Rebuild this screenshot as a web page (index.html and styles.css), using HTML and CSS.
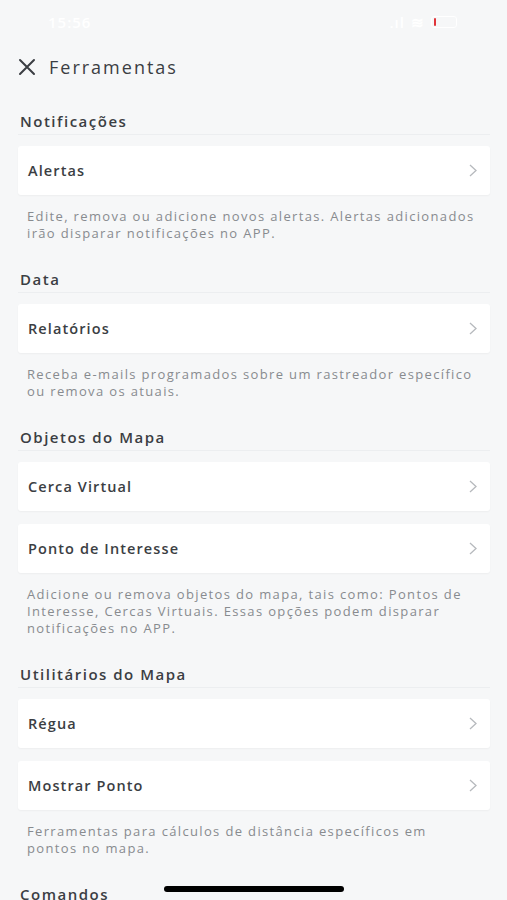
FILE: index.html
```html
<!DOCTYPE html>
<html>
<head>
    <meta charset="utf-8">
    <title>Ferramentas</title>
    <link rel="stylesheet" href="styles.css">
</head>
<body>
    <div class="statusbar">
        <span class="clock">15:56</span>
        <div class="status-icons">
            <span class="signal">.ıl</span>
            <span class="wifi">≋</span>
            <span class="battery"><span class="battery-level"></span></span>
        </div>
    </div>

    <div class="header">
        <svg class="close-icon" width="18" height="18" viewBox="0 0 18 18">
            <path d="M2 2 L16 16 M16 2 L2 16" stroke="#3b3e43" stroke-width="2" stroke-linecap="round" fill="none"/>
        </svg>
        <span class="header-title">Ferramentas</span>
    </div>

    <div class="section">
        <div class="section-title">Notificações</div>
        <div class="card">
            <span>Alertas</span>
            <svg class="chevron" width="8" height="13" viewBox="0 0 8 13"><polyline points="1,1 7,6.5 1,12" /></svg>
        </div>
        <p class="desc">Edite, remova ou adicione novos alertas. Alertas adicionados irão disparar notificações no APP.</p>
    </div>

    <div class="section">
        <div class="section-title">Data</div>
        <div class="card">
            <span>Relatórios</span>
            <svg class="chevron" width="8" height="13" viewBox="0 0 8 13"><polyline points="1,1 7,6.5 1,12" /></svg>
        </div>
        <p class="desc">Receba e-mails programados sobre um rastreador específico ou remova os atuais.</p>
    </div>

    <div class="section">
        <div class="section-title">Objetos do Mapa</div>
        <div class="card">
            <span>Cerca Virtual</span>
            <svg class="chevron" width="8" height="13" viewBox="0 0 8 13"><polyline points="1,1 7,6.5 1,12" /></svg>
        </div>
        <div class="card">
            <span>Ponto de Interesse</span>
            <svg class="chevron" width="8" height="13" viewBox="0 0 8 13"><polyline points="1,1 7,6.5 1,12" /></svg>
        </div>
        <p class="desc">Adicione ou remova objetos do mapa, tais como: Pontos de Interesse, Cercas Virtuais. Essas opções podem disparar notificações no APP.</p>
    </div>

    <div class="section">
        <div class="section-title">Utilitários do Mapa</div>
        <div class="card">
            <span>Régua</span>
            <svg class="chevron" width="8" height="13" viewBox="0 0 8 13"><polyline points="1,1 7,6.5 1,12" /></svg>
        </div>
        <div class="card">
            <span>Mostrar Ponto</span>
            <svg class="chevron" width="8" height="13" viewBox="0 0 8 13"><polyline points="1,1 7,6.5 1,12" /></svg>
        </div>
        <p class="desc">Ferramentas para cálculos de distância específicos em pontos no mapa.</p>
    </div>

    <div class="section">
        <div class="section-title">Comandos</div>
    </div>

    <div class="home-indicator"></div>
</body>
</html>
```

FILE: styles.css
```css
body {
    font-family: "Open Sans", "Noto Sans", sans-serif;
    margin: 0;
    padding: 0;
    background-color: #f6f7f8;
    color: #3b3e43;
    height: 900px;
    overflow: hidden;
}

.statusbar {
    height: 44px;
    display: flex;
    align-items: center;
    justify-content: space-between;
    padding: 0 50px 0 48px;
    color: #ffffff;
    font-size: 15px;
    font-weight: 600;
    letter-spacing: 1px;
}

.status-icons {
    display: flex;
    align-items: center;
    gap: 6px;
}

.battery {
    width: 22px;
    height: 10px;
    border: 1px solid #ffffff;
    border-radius: 3px;
    display: flex;
    align-items: center;
    padding-left: 2px;
}

.battery-level {
    width: 2px;
    height: 8px;
    background-color: #e0343a;
    border-radius: 1px;
}

.header {
    height: 46px;
    display: flex;
    align-items: center;
    padding-left: 18px;
    gap: 13px;
}

.header-title {
    font-size: 18px;
    font-weight: 500;
    letter-spacing: 2px;
}

.section {
    padding: 0 17px 0 18px;
}

.section-title {
    margin: 20px 0 0 0;
    padding: 0 0 2px 2px;
    font-size: 15px;
    font-weight: 600;
    line-height: 22px;
    letter-spacing: 1.5px;
    border-bottom: 1px solid #eceef0;
}

.section + .section .section-title {
    margin-top: 26px;
}

.card {
    margin-top: 11px;
    height: 49px;
    background-color: #ffffff;
    border-radius: 3px;
    box-shadow: 0px 1px 2px rgba(0, 0, 0, 0.04);
    display: flex;
    align-items: center;
    justify-content: space-between;
    padding: 0 13px 0 10px;
    font-size: 14.5px;
    font-weight: 600;
    letter-spacing: 1.1px;
}

.card + .card {
    margin-top: 13px;
}

.chevron polyline {
    fill: none;
    stroke: #b6b9bd;
    stroke-width: 1.3;
}

.desc {
    margin: 13px 0 0 0;
    padding: 0 9px;
    font-size: 13px;
    line-height: 17px;
    letter-spacing: 1.35px;
    color: #888b8f;
}

.home-indicator {
    position: absolute;
    left: 164px;
    top: 886px;
    width: 180px;
    height: 6px;
    background-color: #000000;
    border-radius: 3px;
}
```
